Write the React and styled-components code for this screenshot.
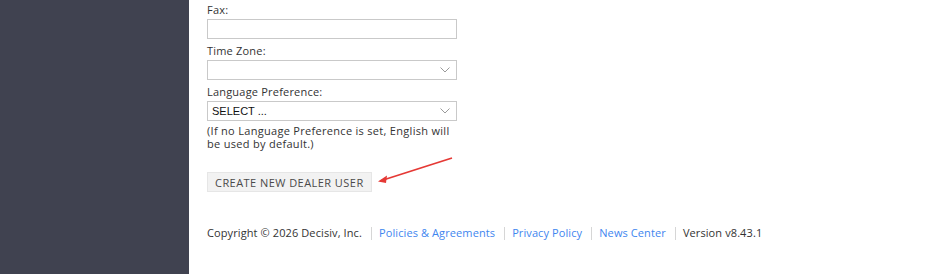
import React from "react";
import styled, { createGlobalStyle } from "styled-components";

const Global = createGlobalStyle`
  html, body { margin: 0; padding: 0; background: #ffffff; }
  body { font-family: "Open Sans", "Liberation Sans", sans-serif; }
`;

const Page = styled.div`
  display: flex;
  min-height: 274px;
  position: relative;
`;

const Sidebar = styled.aside`
  width: 189px;
  flex: none;
  background: #404250;
`;

const Main = styled.main`
  flex: 1;
  padding: 3px 0 0 18px;
  font-size: 11px;
  letter-spacing: 0.2px;
  color: #333;
`;

const Form = styled.div`
  width: 250px;
`;

const Field = styled.div`
  margin-bottom: 5px;
`;

const Label = styled.label`
  display: block;
  line-height: 14px;
  margin-bottom: 2px;
  color: #333;
`;

const TextInput = styled.div`
  box-sizing: border-box;
  height: 20px;
  border: 1px solid #c9c9c9;
  background: #fff;
`;

const Select = styled.div`
  box-sizing: border-box;
  height: 20px;
  border: 1px solid #c9c9c9;
  background: #fff;
  display: flex;
  align-items: center;
  justify-content: space-between;
  padding: 0 6px 0 4px;
  font-family: "Liberation Sans", Arial, sans-serif;
  font-size: 11px;
  letter-spacing: 0;
  color: #111;
`;

const Help = styled.p`
  margin: 3px 0 0;
  line-height: 13px;
  letter-spacing: 0.3px;
  color: #333;
`;

const Button = styled.button`
  margin-top: 17px;
  height: 20px;
  padding: 0 7px;
  border: 1px solid #e6e6e6;
  background: #f2f2f2;
  color: #4a4a4a;
  font-family: inherit;
  font-size: 11px;
  letter-spacing: 0.45px;
  text-transform: uppercase;
`;

const Footer = styled.footer`
  margin-top: 34px;
  display: flex;
  align-items: center;
  font-size: 11px;
  letter-spacing: 0.1px;
  color: #333;
  line-height: 14px;
`;

const FootItem = styled.span`
  color: ${(p) => (p.$link ? "#3f86ef" : "#333")};
  white-space: nowrap;
`;

const Sep = styled.span`
  width: 1px;
  height: 13px;
  background: #d6d6d6;
  margin: 0 7px 0 9px;
`;

const Arrow = styled.svg`
  position: absolute;
  left: 370px;
  top: 152px;
  overflow: visible;
`;

function Chevron() {
  return (
    <svg width="10" height="6" viewBox="0 0 10 6">
      <path d="M0.5 0.5 L5 5 L9.5 0.5" fill="none" stroke="#9a9a9a" strokeWidth="1" />
    </svg>
  );
}

export default function App() {
  return (
    <>
      <Global />
      <Page>
        <Sidebar />
        <Main>
          <Form>
            <Field>
              <Label>Fax:</Label>
              <TextInput />
            </Field>
            <Field>
              <Label>Time Zone:</Label>
              <Select>
                <span />
                <Chevron />
              </Select>
            </Field>
            <Field>
              <Label>Language Preference:</Label>
              <Select>
                <span>SELECT ...</span>
                <Chevron />
              </Select>
              <Help>(If no Language Preference is set, English will be used by default.)</Help>
            </Field>
            <Button>Create New Dealer User</Button>
          </Form>
          <Footer>
            <FootItem>Copyright © 2026 Decisiv, Inc.</FootItem>
            <Sep />
            <FootItem $link>Policies &amp; Agreements</FootItem>
            <Sep />
            <FootItem $link>Privacy Policy</FootItem>
            <Sep />
            <FootItem $link>News Center</FootItem>
            <Sep />
            <FootItem>Version v8.43.1</FootItem>
          </Footer>
        </Main>
        <Arrow width="90" height="40" viewBox="0 0 90 40">
          <line x1="82" y1="6" x2="10" y2="29" stroke="#e53935" strokeWidth="1.8" />
          <path d="M8 29.5 L17 23.5 L16 31 Z" fill="#e53935" />
        </Arrow>
      </Page>
    </>
  );
}
